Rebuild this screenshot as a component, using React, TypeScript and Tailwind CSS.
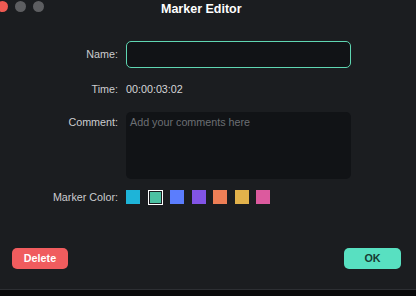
import { useState } from 'react';

const colors = [
  '#1eb4d8',
  '#4cc1a2',
  '#5b7dfd',
  '#8254e6',
  '#ee7f56',
  '#e2b24b',
  '#dc5a9e',
];

export default function App() {
  const [selected, setSelected] = useState(1);

  return (
    <div
      className="w-[416px] h-[296px] bg-[#0a0a0b] overflow-hidden flex flex-col"
      style={{ fontFamily: '"Liberation Sans", Arial, sans-serif' }}
    >
      <div className="h-[290px] bg-[#1b1d20] border-b border-[#2d2f33] flex flex-col">
        {/* title bar */}
        <div className="h-[22px] flex items-start pt-[1px]">
          <div className="flex gap-[7px] ml-[-3px]">
            <span className="w-[11px] h-[11px] rounded-full bg-[#ee5a52]" />
            <span className="w-[11px] h-[11px] rounded-full bg-[#5d5e61]" />
            <span className="w-[11px] h-[11px] rounded-full bg-[#5d5e61]" />
          </div>
          <h1 className="ml-[117px] mt-[1px] text-[12.5px] leading-[14px] font-bold text-white">
            Marker Editor
          </h1>
        </div>

        {/* form */}
        <div className="flex flex-col mt-[19px]">
          <div className="flex items-center h-[27px]">
            <label className="w-[118px] text-right text-[10.75px] text-[#cbcccf]">Name:</label>
            <input
              className="ml-2 w-[225px] h-[27px] rounded-[5px] border border-[#5fd6b2] bg-[#111316] outline-none px-1 text-[11px] text-white"
            />
          </div>

          <div className="flex items-center h-[16px] mt-[13px]">
            <span className="w-[118px] text-right text-[10.75px] text-[#cbcccf]">Time:</span>
            <span className="ml-2 text-[10.75px] text-[#d4d5d7]">00:00:03:02</span>
          </div>

          <div className="flex items-start mt-[15px]">
            <label className="w-[118px] text-right text-[10.75px] leading-[13px] pt-[3.5px] text-[#cbcccf]">
              Comment:
            </label>
            <textarea
              placeholder="Add your comments here"
              className="ml-2 w-[225px] h-[67px] rounded-[5px] bg-[#111316] outline-none resize-none px-1 pt-[3.5px] text-[10.75px] leading-[13px] text-white placeholder:text-[#6c6f74]"
            />
          </div>

          <div className="flex items-center h-[15px] mt-[10.5px]">
            <span className="w-[118px] text-right text-[10.75px] text-[#cbcccf]">Marker Color:</span>
            <div className="ml-2 flex items-center gap-[7.5px]">
              {colors.map((c, i) =>
                i === selected ? (
                  <button
                    key={c}
                    onClick={() => setSelected(i)}
                    className="w-[15px] h-[15px] border-[1.5px] border-white p-[1px] bg-[#1b1d20]"
                  >
                    <span className="block w-full h-full" style={{ backgroundColor: c }} />
                  </button>
                ) : (
                  <button
                    key={c}
                    onClick={() => setSelected(i)}
                    className="w-[14px] h-[14px]"
                    style={{ backgroundColor: c }}
                  />
                )
              )}
            </div>
          </div>
        </div>

        {/* buttons */}
        <div className="flex justify-between mt-[43px] pl-[12px] pr-[15px]">
          <button className="w-[56px] h-[21px] rounded-[5px] bg-[#f05c5e] text-white text-[10.75px] font-bold">
            Delete
          </button>
          <button className="w-[57px] h-[21px] rounded-[5px] bg-[#58e0c1] text-[#173b33] text-[10.75px] font-bold">
            OK
          </button>
        </div>
      </div>
    </div>
  );
}
